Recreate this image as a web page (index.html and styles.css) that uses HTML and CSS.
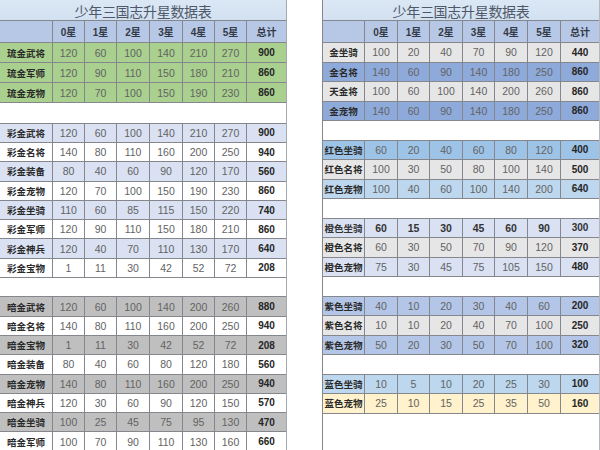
FILE: index.html
```html
<!DOCTYPE html>
<html lang="zh-CN">
<head>
<meta charset="utf-8">
<title>少年三国志升星数据表</title>
<link rel="stylesheet" href="styles.css">
</head>
<body>
<div class="page">
  <div class="sheet sheet-left">
    <div class="title">少年三国志升星数据表</div>
    <div class="r hd"><div></div><div>0星</div><div>1星</div><div>2星</div><div>3星</div><div>4星</div><div>5星</div><div>总计</div></div>

    <div class="r green"><div class="lab">琉金武将</div><div>120</div><div>60</div><div>100</div><div>140</div><div>210</div><div>270</div><div class="tot">900</div></div>
    <div class="r green"><div class="lab">琉金军师</div><div>120</div><div>90</div><div>110</div><div>150</div><div>180</div><div>210</div><div class="tot">860</div></div>
    <div class="r green"><div class="lab">琉金宠物</div><div>120</div><div>70</div><div>100</div><div>150</div><div>190</div><div>230</div><div class="tot">860</div></div>
    <div class="blank"></div>

    <div class="r lav"><div class="lab">彩金武将</div><div>120</div><div>60</div><div>100</div><div>140</div><div>210</div><div>270</div><div class="tot">900</div></div>
    <div class="r wht"><div class="lab">彩金名将</div><div>140</div><div>80</div><div>110</div><div>160</div><div>200</div><div>250</div><div class="tot">940</div></div>
    <div class="r lav"><div class="lab">彩金装备</div><div>80</div><div>40</div><div>60</div><div>90</div><div>120</div><div>170</div><div class="tot">560</div></div>
    <div class="r wht"><div class="lab">彩金宠物</div><div>120</div><div>70</div><div>100</div><div>150</div><div>190</div><div>230</div><div class="tot">860</div></div>
    <div class="r lav"><div class="lab">彩金坐骑</div><div>110</div><div>60</div><div>85</div><div>115</div><div>150</div><div>220</div><div class="tot">740</div></div>
    <div class="r wht"><div class="lab">彩金军师</div><div>120</div><div>90</div><div>110</div><div>150</div><div>180</div><div>210</div><div class="tot">860</div></div>
    <div class="r lav"><div class="lab">彩金神兵</div><div>120</div><div>40</div><div>70</div><div>110</div><div>130</div><div>170</div><div class="tot">640</div></div>
    <div class="r wht"><div class="lab">彩金宝物</div><div>1</div><div>11</div><div>30</div><div>42</div><div>52</div><div>72</div><div class="tot">208</div></div>
    <div class="blank"></div>

    <div class="r gry"><div class="lab">暗金武将</div><div>120</div><div>60</div><div>100</div><div>140</div><div>200</div><div>260</div><div class="tot">880</div></div>
    <div class="r wht"><div class="lab">暗金名将</div><div>140</div><div>80</div><div>110</div><div>160</div><div>200</div><div>250</div><div class="tot">940</div></div>
    <div class="r gry"><div class="lab">暗金宝物</div><div>1</div><div>11</div><div>30</div><div>42</div><div>52</div><div>72</div><div class="tot">208</div></div>
    <div class="r wht"><div class="lab">暗金装备</div><div>80</div><div>40</div><div>60</div><div>80</div><div>120</div><div>180</div><div class="tot">560</div></div>
    <div class="r gry"><div class="lab">暗金宠物</div><div>140</div><div>80</div><div>110</div><div>160</div><div>200</div><div>250</div><div class="tot">940</div></div>
    <div class="r wht"><div class="lab">暗金神兵</div><div>120</div><div>30</div><div>60</div><div>90</div><div>120</div><div>150</div><div class="tot">570</div></div>
    <div class="r gry"><div class="lab">暗金坐骑</div><div>100</div><div>25</div><div>45</div><div>75</div><div>95</div><div>130</div><div class="tot">470</div></div>
    <div class="r wht"><div class="lab">暗金军师</div><div>100</div><div>70</div><div>90</div><div>110</div><div>130</div><div>160</div><div class="tot">660</div></div>
  </div>

  <div class="sheet sheet-right">
    <div class="title">少年三国志升星数据表</div>
    <div class="r hd"><div></div><div>0星</div><div>1星</div><div>2星</div><div>3星</div><div>4星</div><div>5星</div><div>总计</div></div>

    <div class="r lgry"><div class="lab">金坐骑</div><div>100</div><div>20</div><div>40</div><div>70</div><div>90</div><div>120</div><div class="tot">440</div></div>
    <div class="r mblue"><div class="lab">金名将</div><div>140</div><div>60</div><div>90</div><div>140</div><div>180</div><div>250</div><div class="tot">860</div></div>
    <div class="r lgry"><div class="lab">天金将</div><div>100</div><div>60</div><div>100</div><div>140</div><div>200</div><div>260</div><div class="tot">860</div></div>
    <div class="r mblue"><div class="lab">金宠物</div><div>140</div><div>60</div><div>90</div><div>140</div><div>180</div><div>250</div><div class="tot">860</div></div>
    <div class="blank"></div>

    <div class="r sky"><div class="lab">红色坐骑</div><div>60</div><div>20</div><div>40</div><div>60</div><div>80</div><div>120</div><div class="tot">400</div></div>
    <div class="r lgry"><div class="lab">红色名将</div><div>100</div><div>30</div><div>50</div><div>80</div><div>100</div><div>140</div><div class="tot">500</div></div>
    <div class="r pale"><div class="lab">红色宠物</div><div>100</div><div>40</div><div>60</div><div>100</div><div>140</div><div>200</div><div class="tot">640</div></div>
    <div class="blank"></div>

    <div class="r lav bold"><div class="lab">橙色坐骑</div><div>60</div><div>15</div><div>30</div><div>45</div><div>60</div><div>90</div><div class="tot">300</div></div>
    <div class="r lgry"><div class="lab">橙色名将</div><div>60</div><div>30</div><div>50</div><div>70</div><div>90</div><div>120</div><div class="tot">370</div></div>
    <div class="r lav"><div class="lab">橙色宠物</div><div>75</div><div>30</div><div>45</div><div>75</div><div>105</div><div>150</div><div class="tot">480</div></div>
    <div class="blank"></div>

    <div class="r peri"><div class="lab">紫色坐骑</div><div>40</div><div>10</div><div>20</div><div>30</div><div>40</div><div>60</div><div class="tot">200</div></div>
    <div class="r lgry"><div class="lab">紫色名将</div><div>10</div><div>10</div><div>20</div><div>40</div><div>70</div><div>100</div><div class="tot">250</div></div>
    <div class="r peri"><div class="lab">紫色宠物</div><div>50</div><div>20</div><div>30</div><div>50</div><div>70</div><div>100</div><div class="tot">320</div></div>
    <div class="blank"></div>

    <div class="r pale"><div class="lab">蓝色坐骑</div><div>10</div><div>5</div><div>10</div><div>20</div><div>25</div><div>30</div><div class="tot">100</div></div>
    <div class="r yel"><div class="lab">蓝色宠物</div><div>25</div><div>10</div><div>15</div><div>25</div><div>35</div><div>50</div><div class="tot">160</div></div>
    <div class="blank filler"></div>
  </div>
</div>
</body>
</html>
```

FILE: styles.css
```css
html, body {
  margin: 0;
  padding: 0;
  background: #ffffff;
  overflow: hidden;
}

.page {
  width: 600px;
  height: 450px;
  overflow: hidden;
  display: flex;
  align-items: flex-start;
  font-family: "Liberation Sans", "Noto Sans CJK SC", sans-serif;
}

.sheet {
  display: grid;
  gap: 1px;
  background: #85878c;
  flex: none;
}

.sheet-left {
  grid-template-columns: 52px 31px 31px 32px 32px 31px 31px 39px;
  grid-template-rows: 20px 21px repeat(3, 19px) 19.7px repeat(8, 18.3px) 18.3px repeat(8, 18.3px);
  border-right: 1px solid #a4a7ad;
}

.sheet-right {
  margin-left: 35px;
  height: 450px;
  grid-template-columns: 41px 32px 31px 32px 31px 32px 32px 38px;
  grid-template-rows: 20px 21px repeat(19, 18.5px) 1fr;
  border-left: 1px solid #85878c;
  border-right: 1px solid #b4b7bc;
}

.title {
  grid-column: 1 / -1;
  background: linear-gradient(#dbe7f4, #d2e1f1);
  color: #4e5869;
  font-family: "Noto Sans CJK SC", sans-serif;
  font-size: 14px;
  letter-spacing: -0.3px;
  display: flex;
  align-items: center;
  justify-content: center;
  padding-top: 1px;
}

.blank {
  grid-column: 1 / -1;
  background: #ffffff;
}

.r {
  display: contents;
}

.r > div {
  display: flex;
  align-items: center;
  justify-content: center;
  font-size: 10.5px;
  color: #636363;
  white-space: nowrap;
}

.r > .lab {
  font-family: "Noto Sans CJK SC", sans-serif;
  font-weight: 700;
  font-size: 9.5px;
  color: #2a2a2a;
}

.r > .tot {
  font-size: 10px;
  font-weight: 700;
  color: #262626;
}

.r.bold > div {
  font-weight: 700;
  color: #333333;
}

.hd > div {
  background: #b7c8e7;
  font-size: 10px;
  font-weight: 700;
  color: #333a46;
  font-family: "Liberation Sans", "Noto Sans CJK SC", sans-serif;
}

.green > div { background: #a9d08e; }
.lav > div { background: #d9e1f2; }
.wht > div { background: #ffffff; }
.gry > div { background: #bfbfbf; }
.lgry > div { background: #e7e6e6; }
.mblue > div { background: #8eaadb; }
.sky > div { background: #9dc3e6; }
.pale > div { background: #bdd7ee; }
.peri > div { background: #b4c6e7; }
.yel > div { background: #fff2cc; }
```
